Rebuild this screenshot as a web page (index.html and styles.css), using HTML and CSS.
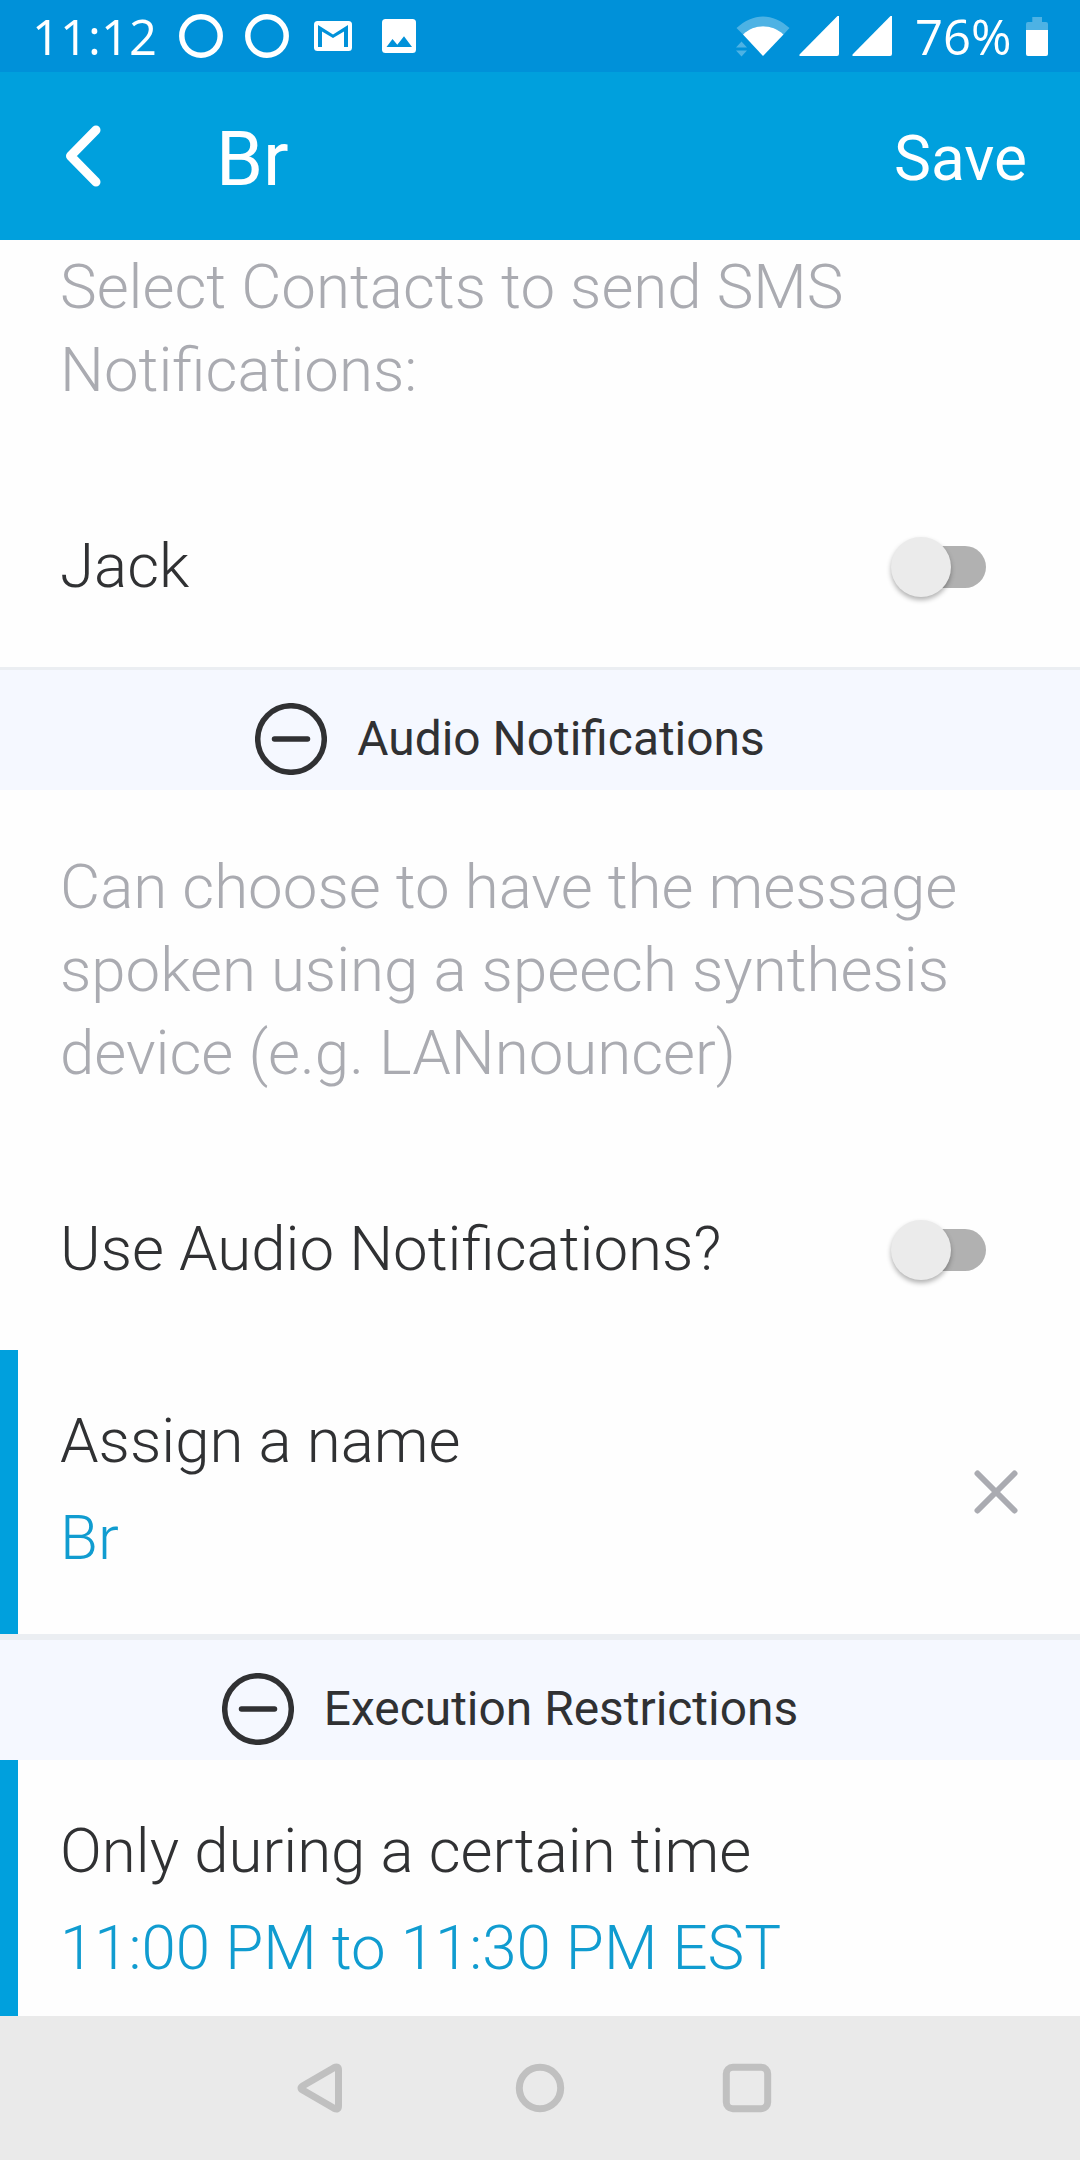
FILE: index.html
```html
<!DOCTYPE html>
<html lang="en">
<head>
    <meta charset="UTF-8">
    <meta name="viewport" content="width=device-width, initial-scale=1.0">
    <title>Br</title>
    <link rel="stylesheet" href="styles.css">
</head>
<body>

<div class="status-bar">
    <span class="clock">11:12</span>
    <svg class="ring" width="44" height="44" viewBox="0 0 44 44"><circle cx="22" cy="22" r="19.2"/></svg>
    <svg class="ring" width="44" height="44" viewBox="0 0 44 44"><circle cx="22" cy="22" r="19.2"/></svg>
    <svg class="mail" width="38" height="30" viewBox="0 0 38 30">
        <rect width="38" height="30" rx="3.5" fill="#fff"/>
        <path d="M4 4L19 13.500L34 4V26H30V10.500L19 17L8 10.500V26H4z" fill="#0091d9"/>
    </svg>
    <svg class="photo" width="34" height="34" viewBox="0 0 34 34">
        <rect width="34" height="34" rx="3.5" fill="#fff"/>
        <path d="M4.500 28L10.500 20L15.300 25.700L22 17.300L30 28z" fill="#0091d9"/>
    </svg>

    <div class="status-right">
        <svg width="54" height="42" viewBox="0 0 54 42">
            <path class="faint" d="M.5 13C17-2.500 37-2.500 53.500 13L47.500 19.500C36 8.500 18 8.500 7 19.500z"/>
            <path d="M7 19.500C18 8.500 36 8.500 47.500 19.500L27 41z" fill="#fff"/>
            <path class="faint" d="M0 32.500L5.500 26.500L11 32.500zM0 35.500H11L5.500 41.500z"/>
        </svg>
        <svg class="signal" width="40" height="40" viewBox="0 0 40 40"><path d="M40 0V38Q40 40 38 40H.5V38.500L38.500 0z" fill="#fff"/></svg>
        <svg class="signal2" width="40" height="40" viewBox="0 0 40 40"><path d="M40 0V38Q40 40 38 40H.5V38.500L38.500 0z" fill="#fff"/></svg>
        <span class="percent">76%</span>
        <svg class="battery" width="22" height="39" viewBox="0 0 22 39">
            <path class="faint" d="M6.300 0H16V5H20Q22 5 22 7V13H0V7Q0 5 2 5H6.300z"/>
            <path d="M0 13H22V37Q22 39 20 39H2Q0 39 0 37z" fill="#fff"/>
        </svg>
    </div>
</div>

<header>
    <svg class="back" width="36" height="64" viewBox="0 0 36 64"><path d="M31 6L5.500 32L31 58"/></svg>
    <h1>Br</h1>
    <a class="save">Save</a>
</header>

<main>
    <p class="hint hint-sms">Select Contacts to send SMS<br>Notifications:</p>
    <div class="row">
        <span>Jack</span>
        <div class="toggle"><div class="thumb"></div></div>
    </div>

    <h2 class="section">
        <svg width="72" height="72" viewBox="0 0 72 72"><circle cx="36" cy="36" r="33.3"/><path d="M19.500 36H52.500"/></svg>
        <span>Audio Notifications</span>
    </h2>
    <p class="hint hint-audio">Can choose to have the message<br>spoken using a speech synthesis<br>device (e.g. LANnouncer)</p>
    <div class="row">
        <span>Use Audio Notifications?</span>
        <div class="toggle"><div class="thumb"></div></div>
    </div>
    <div class="field">
        <div>
            <div class="label">Assign a name</div>
            <div class="value">Br</div>
        </div>
        <svg class="clear" width="44" height="44" viewBox="0 0 44 44"><path d="M3.500 3.500L40.500 40.500M40.500 3.500L3.500 40.500"/></svg>
    </div>

    <h2 class="section thick">
        <svg width="72" height="72" viewBox="0 0 72 72"><circle cx="36" cy="36" r="33.3"/><path d="M19.500 36H52.500"/></svg>
        <span>Execution Restrictions</span>
    </h2>
    <div class="field last">
        <div>
            <div class="label">Only during a certain time</div>
            <div class="value">11:00 PM to 11:30 PM EST</div>
        </div>
    </div>
</main>

<nav>
    <svg class="nav-back" width="46" height="50" viewBox="0 0 46 50"><path d="M37 4.700Q41.500 2.500 41.500 7V43Q41.500 47.500 37 45.300L6 27.300Q2 25 6 22.700z"/></svg>
    <svg width="50" height="50" viewBox="0 0 50 50"><circle cx="25" cy="25" r="20.700"/></svg>
    <svg width="50" height="50" viewBox="0 0 50 50"><rect x="4.300" y="4.300" width="41.400" height="41.400" rx="6.500"/></svg>
</nav>

</body>
</html>
```
FILE: styles.css
```css
body {
    font-family: Roboto, sans-serif;
    margin: 0;
    width: 1080px;
    height: 2160px;
    background-color: #fefefe;
    color: #303133;
    display: flex;
    flex-direction: column;
    overflow: hidden;
}

svg {
    display: block;
    flex-shrink: 0;
}

.status-bar {
    height: 72px;
    background-color: #0091d9;
    color: #fff;
    display: flex;
    align-items: center;
    padding: 0 32px;
    font-family: "Open Sans", "Noto Sans", sans-serif;
    font-size: 49px;
    font-weight: 400;
    line-height: 72px;
}

.clock {
    width: 147px;
}

.ring {
    margin-right: 22px;
}

.ring circle {
    fill: none;
    stroke: #fff;
    stroke-width: 5.5;
}

.mail {
    margin-left: 3px;
}

.photo {
    margin-left: 30px;
}

.status-right {
    margin-left: auto;
    display: flex;
    align-items: center;
}

.faint {
    fill: #4db2e4;
}

.signal {
    margin-left: 9px;
}

.signal2 {
    margin-left: 13px;
}

.percent {
    margin-left: 23px;
    width: 111px;
}

header {
    height: 168px;
    background-color: #00a0dd;
    color: #fff;
    display: flex;
    align-items: center;
    padding: 0 53px 0 65px;
}

.back path {
    fill: none;
    stroke: #fff;
    stroke-width: 9;
    stroke-linecap: round;
    stroke-linejoin: round;
}

h1 {
    margin: 5px 0 0 115px;
    font-size: 75.5px;
    font-weight: 400;
}

.save {
    margin: 4px 0 0 auto;
    font-size: 62.2px;
}

main {
    height: 1776px;
    font-size: 61.8px;
    font-weight: 300;
    line-height: 83px;
}

.hint {
    margin: 0;
    padding: 6px 60px 0;
    color: #aaabb1;
    box-sizing: border-box;
}

.hint-sms {
    height: 225px;
}

.hint-audio {
    height: 358px;
    padding-top: 56px;
}

.row {
    height: 202px;
    padding: 1px 94px 0 60px;
    box-sizing: border-box;
    display: flex;
    align-items: center;
    justify-content: space-between;
}

.toggle {
    width: 86px;
    height: 42px;
    border-radius: 21px;
    background-color: #b1b1b1;
    display: flex;
    align-items: center;
}

.thumb {
    width: 60px;
    height: 60px;
    margin-left: -9.5px;
    flex-shrink: 0;
    border-radius: 50%;
    background-color: #ebebeb;
    box-shadow: 0 3px 5px rgba(0, 0, 0, 0.3);
}

.section {
    height: 123px;
    margin: 0;
    padding-top: 17px;
    padding-right: 60px;
    box-sizing: border-box;
    border-top: 3px solid #ebeef2;
    background-color: #f5f8ff;
    display: flex;
    align-items: center;
    justify-content: center;
    gap: 30px;
    font-size: 47.9px;
    font-weight: 400;
}

.section span {
    padding-top: 2px;
}

.thick {
    height: 126px;
    border-top-width: 6px;
}

.section svg {
    fill: none;
    stroke: #303133;
    stroke-width: 5.5;
    stroke-linecap: round;
}

.field {
    height: 284px;
    padding: 50px 62px 0 42px;
    box-sizing: border-box;
    border-left: 18px solid #00a0dd;
    display: flex;
    justify-content: space-between;
}

.last {
    height: 256px;
}

.value {
    margin-top: 14px;
    color: #109cd0;
}

.clear {
    margin-top: 70px;
    fill: none;
    stroke: #aaabb1;
    stroke-width: 6;
    stroke-linecap: round;
}

nav {
    height: 144px;
    padding-left: 297px;
    background-color: #eaeaea;
    display: flex;
    align-items: center;
    gap: 157px;
}

nav svg {
    fill: none;
    stroke: #c0c0c0;
    stroke-width: 7;
    stroke-linejoin: round;
}

.nav-back {
    margin-right: 15px;
}
```
